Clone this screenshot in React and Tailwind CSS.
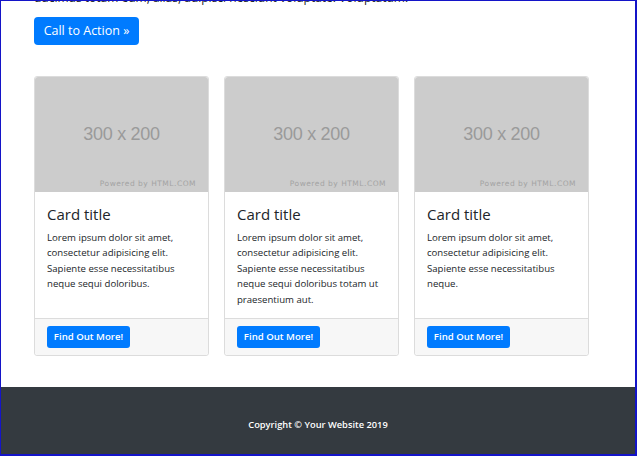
import React from 'react';

const cards = [
  {
    lines: ['Lorem ipsum dolor sit amet,', 'consectetur adipisicing elit.', 'Sapiente esse necessitatibus', 'neque sequi doloribus.'],
  },
  {
    lines: [
      'Lorem ipsum dolor sit amet,',
      'consectetur adipisicing elit.',
      'Sapiente esse necessitatibus',
      'neque sequi doloribus totam ut',
      'praesentium aut.',
    ],
  },
  {
    lines: ['Lorem ipsum dolor sit amet,', 'consectetur adipisicing elit.', 'Sapiente esse necessitatibus', 'neque.'],
  },
];

const Placeholder = () => (
  <div className="relative h-[115px] bg-[#cccccc] rounded-t-[3px] flex items-center justify-center">
    <span className="text-[18px] text-[#9a9a9a] font-['Liberation_Sans',sans-serif] tracking-[-0.3px]">300 x 200</span>
    <span className="absolute right-[12px] bottom-[3px] text-[7.5px] text-[#a3a3a3] tracking-[0.5px] font-['DejaVu_Sans',sans-serif]">
      Powered by HTML.COM
    </span>
  </div>
);

const Card = ({ lines }) => (
  <div className="flex flex-col border border-[#dcdcdc] rounded-[3px] bg-white">
    <Placeholder />
    <div className="flex-1 px-[12px] pt-[13px] pb-[11px]">
      <h5 className="text-[15px] leading-[18px] text-[#212529] mb-[7px]">Card title</h5>
      <p className="text-[9.6px] leading-[15.4px] text-[#212529]">
        {lines.map((l) => (
          <span key={l} className="block whitespace-nowrap">
            {l}
          </span>
        ))}
      </p>
    </div>
    <div className="flex items-center bg-[#f7f7f7] border-t border-[#dcdcdc] px-[12px] py-[7px] rounded-b-[3px]">
      <button className="bg-[#007bff] text-white text-[9.6px] font-semibold h-[22px] w-[83px] rounded-[3px]">
        Find Out More!
      </button>
    </div>
  </div>
);

export default function App() {
  return (
    <div className="w-[637px] h-[456px] border-t border-l border-r-2 border-b-2 border-[#1414c8] flex flex-col bg-white overflow-hidden font-['Open_Sans',sans-serif]">
      <div className="flex-1 px-[33px] overflow-hidden">
        <p className="text-[12px] leading-[16px] text-[#212529] mt-[-11px]">
          ducimus totam eum, alias, adipisci nesciunt voluptate. Voluptatum.
        </p>
        <button className="mt-[11px] bg-[#007bff] text-white text-[12.5px] h-[28px] w-[105px] rounded-[4px]">
          Call to Action »
        </button>
        <div className="mt-[31px] grid grid-cols-[175px_175px_175px] gap-[15px]">
          {cards.map((c, i) => (
            <Card key={i} lines={c.lines} />
          ))}
        </div>
      </div>
      <footer className="h-[67px] bg-[#343a40] flex items-center justify-center pt-[8px]">
        <p className="text-[9.3px] font-semibold text-white">Copyright © Your Website 2019</p>
      </footer>
    </div>
  );
}
